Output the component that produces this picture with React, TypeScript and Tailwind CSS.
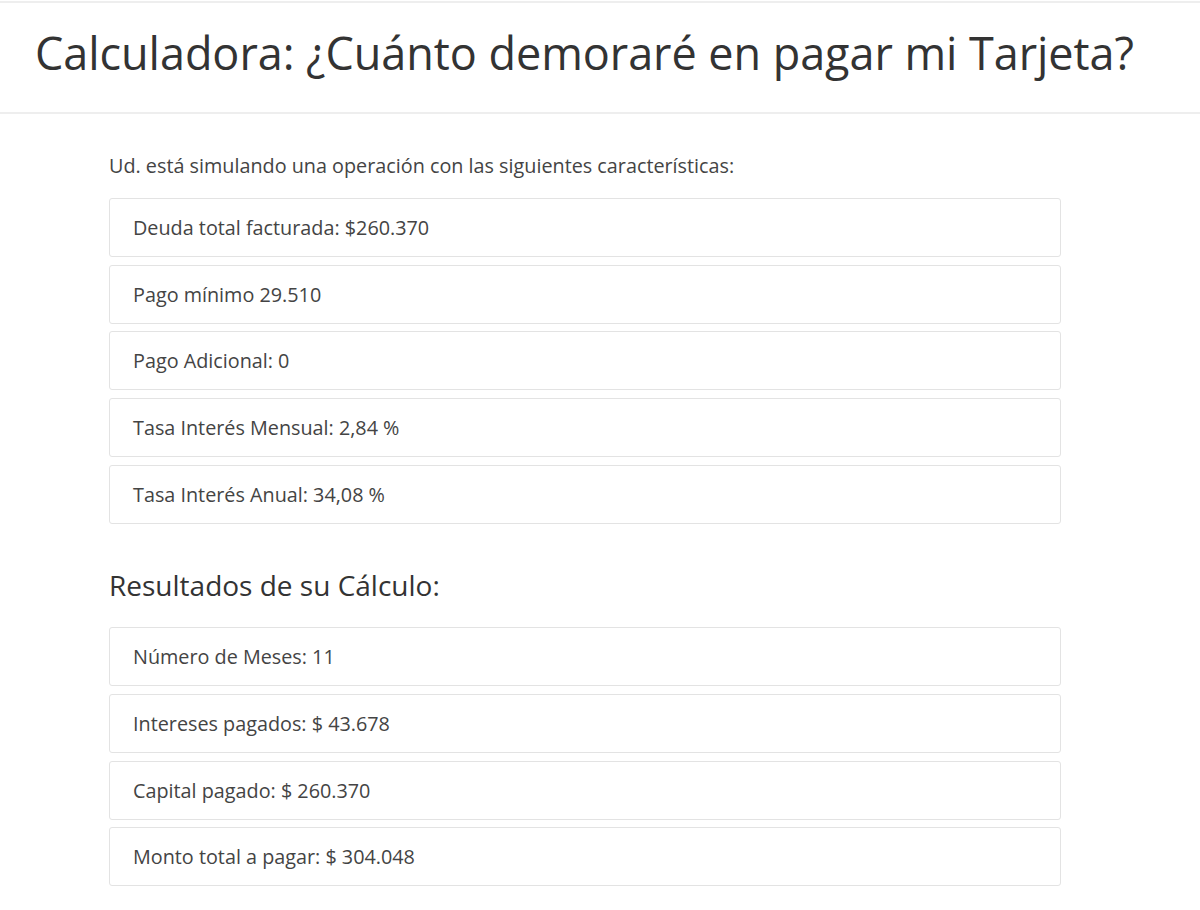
const datosOperacion = [
  'Deuda total facturada: $260.370',
  'Pago mínimo 29.510',
  'Pago Adicional: 0',
  'Tasa Interés Mensual: 2,84 %',
  'Tasa Interés Anual: 34,08 %',
];

const resultados = [
  'Número de Meses: 11',
  'Intereses pagados: $ 43.678',
  'Capital pagado: $ 260.370',
  'Monto total a pagar: $ 304.048',
];

function Item({ texto }: { texto: string }) {
  return (
    <div className="h-[59px] flex items-center px-[23px] border border-[#e3e3e3] rounded-[3px] bg-white">
      {texto}
    </div>
  );
}

export default function App() {
  return (
    <div
      className="min-h-[910px] bg-white text-[#444]"
      style={{ fontFamily: '"Open Sans", "Liberation Sans", sans-serif' }}
    >
      <header className="border-t-2 border-b-2 border-[#eeeeee] mt-px h-[113px] flex items-center pl-[35px]">
        <h1 className="text-[45px] leading-none text-[#333] -mt-[11px] tracking-[-0.05px]">
          Calculadora: ¿Cuánto demoraré en pagar mi Tarjeta?
        </h1>
      </header>

      <main className="ml-[109px] w-[952px] pt-[38px] text-[19.8px] leading-[27px]">
        <p className="mb-[19px] text-[#444]">
          Ud. está simulando una operación con las siguientes características:
        </p>

        <div className="flex flex-col gap-[7.7px]">
          {datosOperacion.map((d) => (
            <Item key={d} texto={d} />
          ))}
        </div>

        <h2 className="text-[28px] text-[#333] mt-[45px] mb-[25px] leading-[1.2]">
          Resultados de su Cálculo:
        </h2>

        <div className="flex flex-col gap-[7.7px]">
          {resultados.map((r) => (
            <Item key={r} texto={r} />
          ))}
        </div>
      </main>
    </div>
  );
}
